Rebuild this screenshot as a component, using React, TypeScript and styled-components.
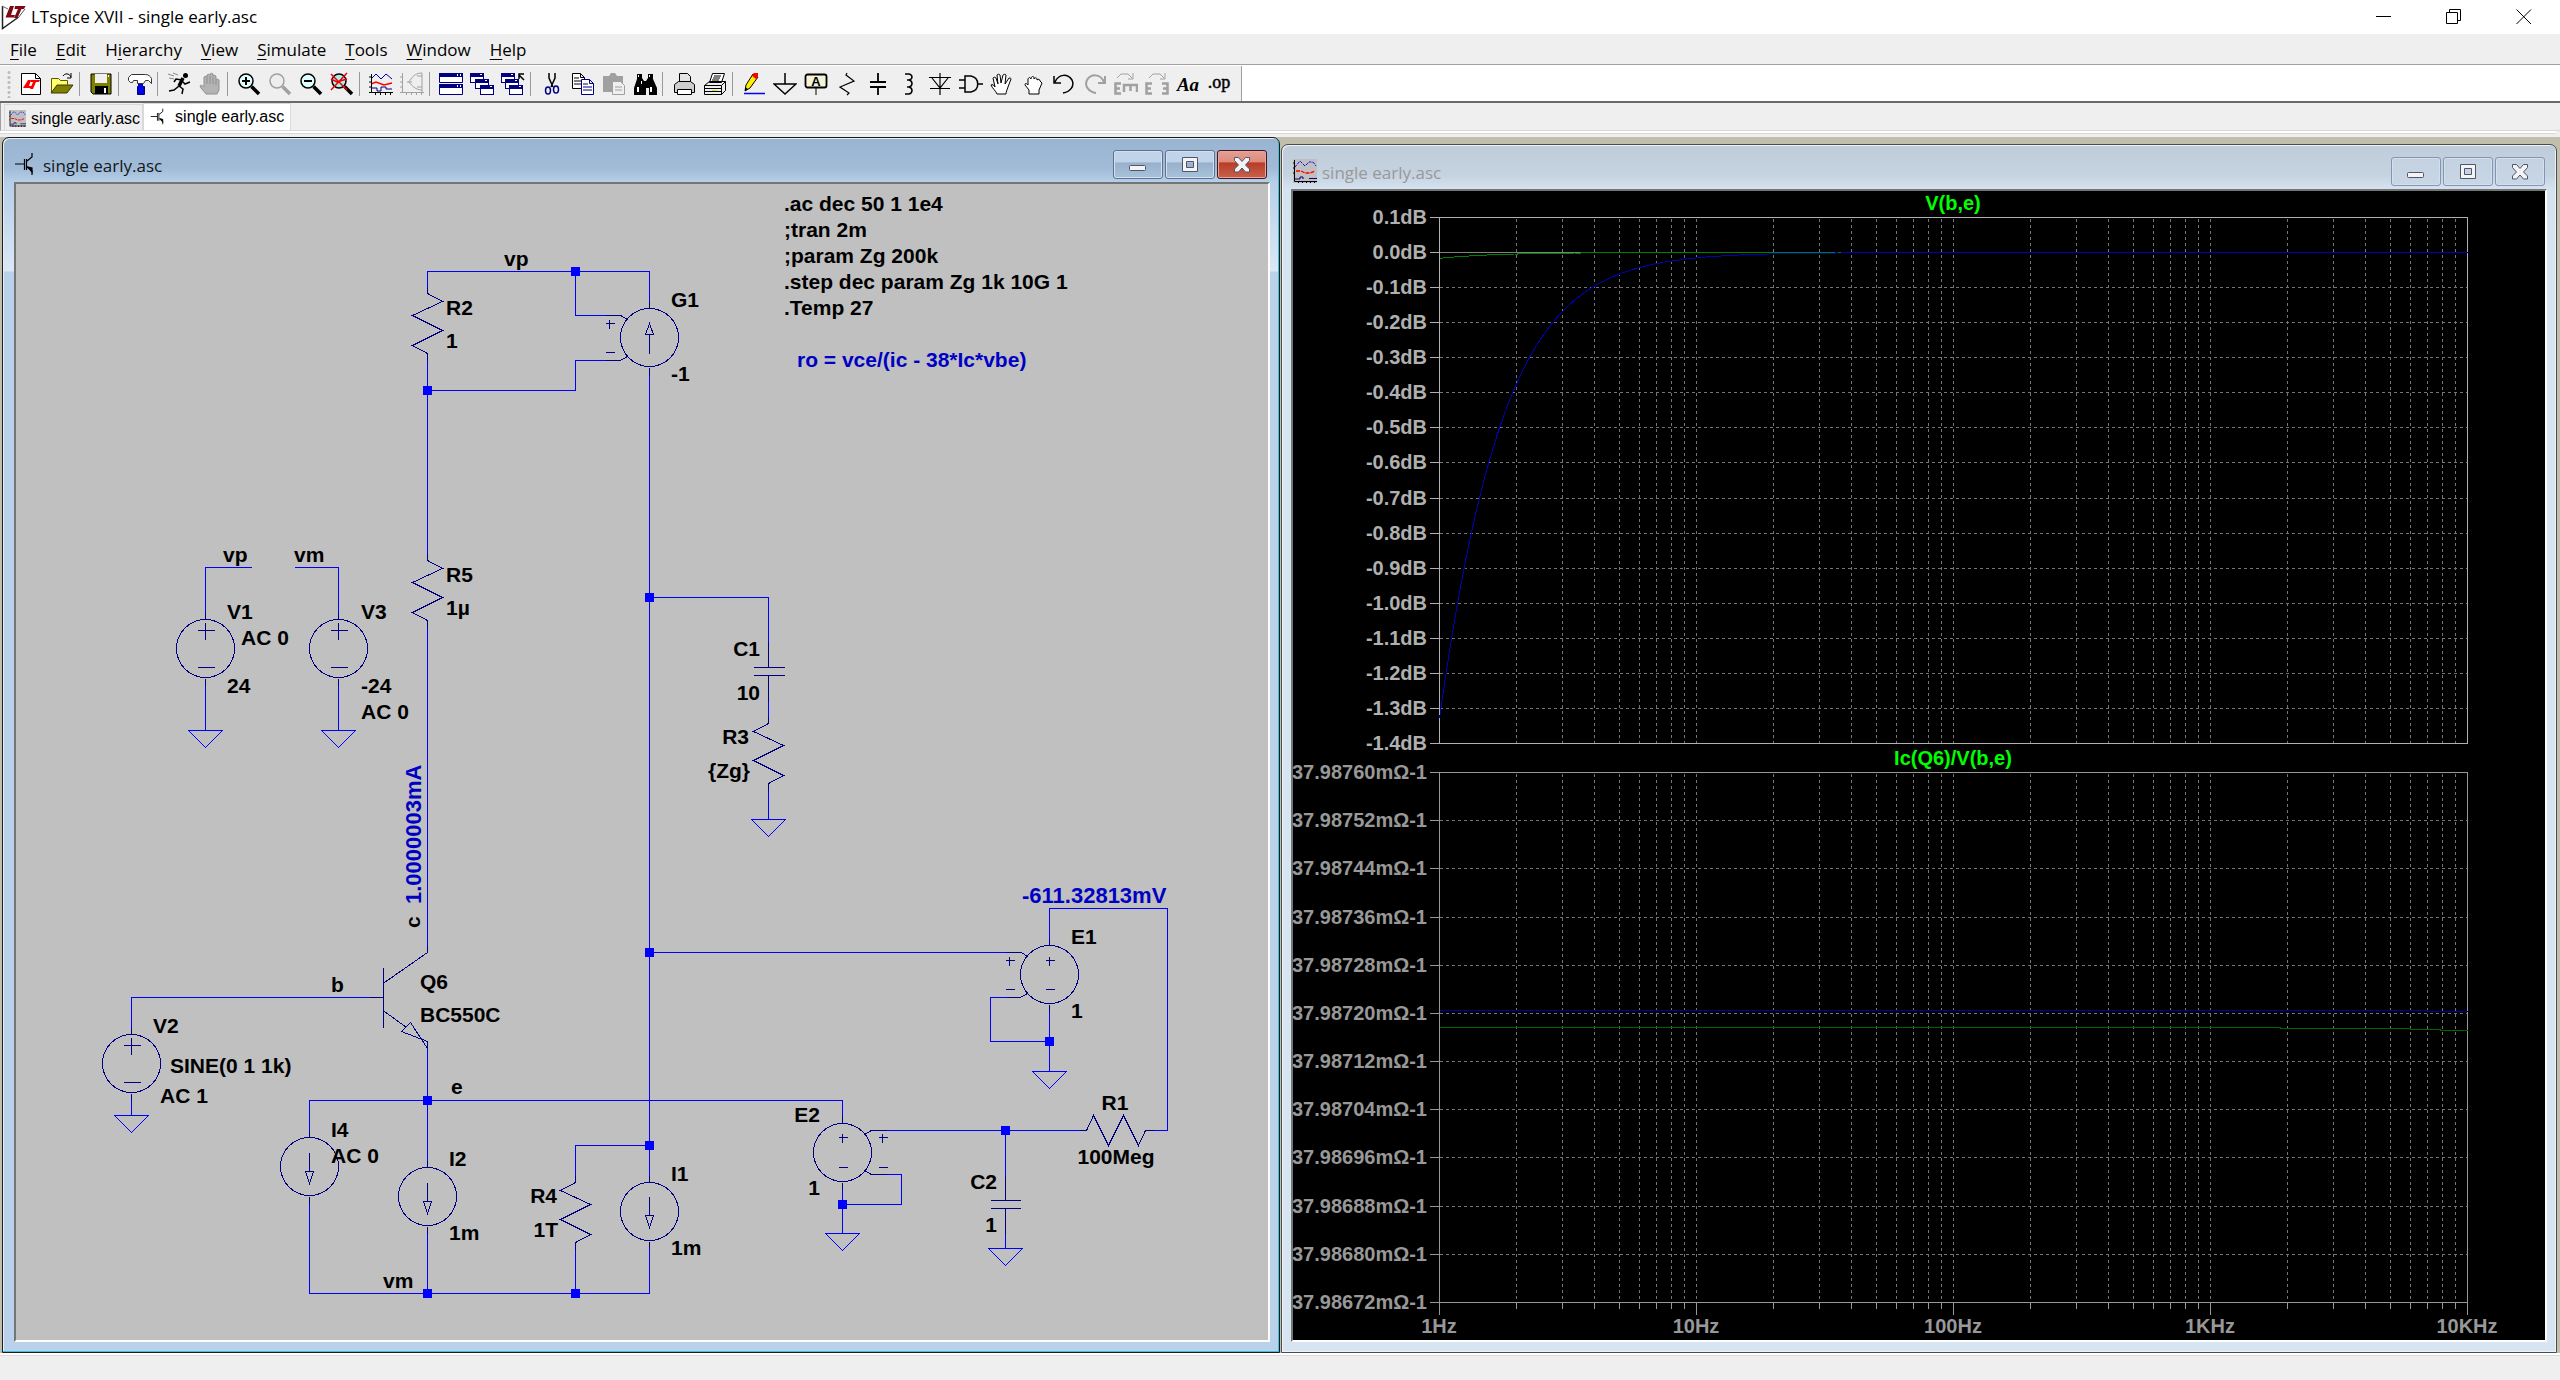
import React from 'react';
import styled, { createGlobalStyle } from 'styled-components';

const UI_FONT = '"Open Sans", "Noto Sans", sans-serif';
const ARIAL = '"Liberation Sans", Arial, sans-serif';

const GlobalStyle = createGlobalStyle`
  * { box-sizing: border-box; }
  body { margin: 0; background: #efefef; overflow: hidden; }
  button { font: inherit; color: inherit; background: none; border: 0; padding: 0; margin: 0; }
`;

/* ---------- application frame ---------- */

const App_ = styled.div`
  display: flex;
  flex-direction: column;
  height: 100vh;
  font-family: ${UI_FONT};
  font-size: 17px;
  color: #000;
  background: #efefef;
`;

const TitleBar = styled.header`
  display: flex;
  align-items: center;
  height: 34px;
  padding: 0 1px;
  background: #fff;
`;

const AppTitle = styled.h1`
  flex: 1;
  margin: 0 0 0 5px;
  font-size: 17px;
  line-height: 36px;
  font-weight: 400;
`;

const CaptionButton = styled.button`
  display: grid;
  place-items: center;
  width: 70px;
  height: 34px;
`;

const MenuBar = styled.nav`
  display: flex;
  height: 30px;
`;

const MenuItem = styled.button`
  padding: 0 9px 0 10px;
  line-height: 31px;
  u { text-underline-offset: 3px; text-decoration-thickness: 1px; }
`;

const ToolbarRow = styled.div`
  display: flex;
  height: 39px;
  background: #fff;
  border-top: 1px solid #a0a0a0;
  border-bottom: 2px solid #696969;
  padding-top: 1px;
`;

const Toolbar = styled.div`
  display: flex;
  align-items: center;
  padding: 0 7px 0 7px;
  background: #efefef;
  border-right: 1px solid #a0a0a0;
`;

const Grip = styled.span`
  width: 8px;
  height: 28px;
  background: radial-gradient(circle, #bcbcbc 0 1px, transparent 2px) 0 0 / 4px 5px repeat-y;
`;

const ToolButton = styled.button`
  display: grid;
  place-items: center;
  width: 31px;
  height: 28px;
`;

const Separator = styled.span`
  width: 8px;
  height: 24px;
  background: linear-gradient(#9a9a9a, #9a9a9a) 2px 0 / 1px 100% no-repeat;
`;

const TabStrip = styled.div`
  display: flex;
  align-items: flex-end;
  height: 28px;
  padding-left: 3px;
  border-left: 1px solid #a0a0a0;
  border-bottom: 1px solid #d9d9d9;
  font-family: ${ARIAL};
  font-size: 16px;
`;

const Tab = styled.button<{ $active?: boolean }>`
  display: flex;
  align-items: ${(p) => (p.$active ? 'flex-start' : 'center')};
  gap: ${(p) => (p.$active ? 8 : 5)}px;
  height: ${(p) => (p.$active ? 27 : 26)}px;
  padding: ${(p) => (p.$active ? '4px 6px 0 6px' : '2px 2px 0 4px')};
  line-height: 18px;
  background: ${(p) => (p.$active ? '#fff' : '#efefef')};
  border: 1px solid #d9d9d9;
  border-bottom: 0;
`;

const TabRule = styled.div`
  height: 6px;
  margin-right: 4px;
  background: linear-gradient(#fff 0 2px, #d9d9d9 2px 3px, #efefef 3px);
`;

const Desktop = styled.main`
  flex: 1;
  min-height: 0;
  display: grid;
  grid-template-columns: 1278fr 1276fr;
  gap: 1px;
  padding: 0 3px 0 2px;
  background: #c2beae;
`;

const StatusBar = styled.footer`
  height: 27px;
  border-top: 1px solid #fff;
  background: linear-gradient(#fff 0 1px, #d9d9d9 1px 2px, #efefef 2px);
`;

/* ---------- MDI child window ---------- */

const Child = styled.section<{ $active?: boolean }>`
  display: flex;
  flex-direction: column;
  min-width: 0;
  min-height: 0;
  margin-top: ${(p) => (p.$active ? 0 : 7)}px;
  padding: ${(p) => (p.$active ? '0 9px 10px 11px' : '0 9px 10px 9px')};
  border: 1px solid ${(p) => (p.$active ? '#1c1c1c' : '#4c4c4c')};
  border-radius: 7px 7px 0 0;
  box-shadow: ${(p) =>
    p.$active ? 'inset -1px -1px #35c4dd, inset 1px 1px #e6eef7' : 'inset 1px 1px #eef3f8, inset -1px -1px #eef3f8'};
  background: ${(p) =>
    p.$active
      ? 'linear-gradient(#99b4d1 0, #a1bbd7 30px, #b6cfe9 44px, #dbe8f6 133px, #b9d1ea 134px)'
      : 'linear-gradient(#bfccda 0, #c5d2df 30px, #d5e2f0 44px, #d7e4f2 134px)'};
`;

const ChildTitle = styled.div<{ $active?: boolean }>`
  flex: none;
  display: flex;
  align-items: center;
  height: 44px;
  color: ${(p) => (p.$active ? '#101820' : '#999999')};
`;

const ChildName = styled.h2`
  flex: 1;
  margin: 12px 0 0 5px;
  font-size: 17px;
  line-height: 24px;
  font-weight: 400;
`;

const IconSlot = styled.span<{ $active?: boolean }>`
  display: grid;
  margin: 8px 0 0 ${(p) => (p.$active ? 0 : 2)}px;
`;

const ChildButtons = styled.div<{ $active?: boolean }>`
  display: flex;
  gap: 2px;
  margin: ${(p) => (p.$active ? '9px 3px 0 0' : '9px 2px 0 0')};
`;

const ChildButton = styled.button<{ $tone: 'blue' | 'red' | 'pale' }>`
  display: grid;
  place-items: center;
  width: 50px;
  height: 29px;
  border: 1px solid ${(p) => ({ blue: '#5f7391', red: '#431422', pale: '#8394b4' })[p.$tone]};
  border-radius: 3px;
  box-shadow: inset 0 0 0 1px ${(p) => (p.$tone === 'red' ? '#e9a69c' : '#d3e0ee')};
  background: ${(p) =>
    ({
      blue: 'linear-gradient(#bfd3e9 0 42%, #98b0cb 43%, #a9c2dc)',
      red: 'linear-gradient(#e49f93 0, #dc8a7c 42%, #b83c26 43%, #c8614c)',
      pale: 'linear-gradient(#c4d1e1, #c9d6e6)',
    })[p.$tone]};
`;

const ChildBody = styled.div<{ $fill: string }>`
  flex: 1;
  min-height: 0;
  overflow: hidden;
  border: 2px solid;
  border-color: #757575 #fdfdfd #fdfdfd #757575;
  background: ${(p) => p.$fill};
`;

const Sheet = styled.svg`
  display: block;
  width: 100%;
  height: 100%;
`;

/* ---------- icons ---------- */

const WaveIcon = ({ size = 24 }: { size?: number }) => (
  <svg width={size} height={size} viewBox="0 0 24 24">
    <rect width="24" height="24" fill="#c0c0c0" />
    <path d="M2 8l5-6 5 5 4-4h4l3 4" fill="none" stroke="#1010ff" strokeDasharray="3 1" />
    <path d="M3 12h5l4 2h5l5-2" fill="none" stroke="#ff0000" strokeWidth="1.300" strokeDasharray="4 1" />
    <path d="M2 20h5v-2h3v2M16 19.500h8" fill="none" stroke="#000080" />
    <path d="M1.500 1v21.500H24M1 4H0M1 9H0M1 14H0M5.500 22v2M9.500 22v2M13.500 22v2M17.500 22v2M21.500 22v2" stroke="#000" fill="none" />
  </svg>
);

const TransistorIcon = ({ size = 24 }: { size?: number }) => (
  <svg width={size} height={size} viewBox="0 0 24 24" fill="none" stroke="#000" strokeWidth="1.200">
    <path d="M1 12h9M10.500 7v11M12.500 7v11M13 9l5-4V1M13 15l5 4v4" />
    <path d="M14 15l4 1v4z" fill="#000" />
  </svg>
);

const AppLogo = () => (
  <svg width="25" height="28" viewBox="0 0 25 28">
    <path d="M1.500 3v22.500L17 14.500" fill="none" stroke="#222" strokeWidth="1.500" />
    <path d="M1 3L7 6" stroke="#666" />
    <path d="M9 3h4l-3 9h4l-1 2.500H4.500z" fill="#7d0a12" />
    <path d="M14 3h10.500l-1.500 3h-2.500l-4 9h-3.500l4-9h-3.500z" fill="#7d0a12" />
    <path d="M24 6l-7 9" stroke="#555" />
  </svg>
);

const K = '#000';
const G = '#a0a0a0';

const lens = (c: string, glass: string) => (
  <>
    <path d="M14.500 14.500l7.500 7.500" stroke={c} strokeWidth="3.500" />
    <circle cx="9" cy="9" r="7" fill={glass} stroke={c} strokeWidth="1.500" />
  </>
);

const cascade = (x: number, y: number) => (
  <g key={x}>
    <rect x={x + 0.5} y={y + 0.5} width="13" height="9" fill="#fff" stroke="#000080" />
    <rect x={x} y={y} width="14" height="4" fill="#000080" />
    <rect x={x + 10} y={y + 1} width="2" height="1" fill="#fff" />
  </g>
);

const icons: Record<string, React.ReactNode> = {
  'New Schematic': (
    <>
      <path d="M2.500 1.500h14l5 5v16h-19z" fill="#fff" stroke={K} />
      <path d="M16.500 1.500v5h5" fill="none" stroke={K} />
      <path d="M9 8h3l-2 6h3l-1 2H4z" fill="#f00" />
      <path d="M12 8h9l-1 2h-3l-3 7H11l3-7h-3z" fill="#f00" />
    </>
  ),
  Open: (
    <>
      <path d="M1.500 20.500V6.500h7l2 2h7v4" fill="#ffff70" stroke="#5a5a00" />
      <path d="M1 21l6-8h16l-6 8z" fill="#808000" stroke="#3a3a00" />
      <path d="M13 4c2-3 6-3 8 1M21 1v5h-4" fill="none" stroke={K} />
    </>
  ),
  Save: (
    <>
      <path d="M2 2h20v20H4l-2-2z" fill="#808000" stroke={K} />
      <path d="M6 2h12v9H6z" fill="#efefef" />
      <path d="M6 14h13v8H6z" fill={K} />
      <path d="M15 16h2v5h-2zM19 3h1v2h-1z" fill="#fff" />
    </>
  ),
  'Control Panel': (
    <>
      <path d="M10.500 11.500h4v3h2v8h-7v-8h1z" fill="#0000e8" stroke="#000080" />
      <path d="M.5 5.500l3-3h14c3 0 5 2 6 4v5l-3-3h-3l-2 3h-6V8.500h-4l-1 2h-2l-2-2z" fill="#fff" stroke="#333" />
    </>
  ),
  Run: (
    <>
      <circle cx="18.500" cy="3.500" r="2.500" fill={K} />
      <path d="M16 6l-4 8" fill="none" stroke={K} strokeWidth="3.500" />
      <path d="M12 14l4 3-1 5M12 14l-5 4-5 1M15 8L9 7 7 10M15 9l3 3 5-2" fill="none" stroke={K} strokeWidth="1.500" />
      <path d="M1 2l6 2M2 6l5 1M6 1l5 2" stroke="#888" />
    </>
  ),
  Halt: (
    <path
      d="M8 22c-2-3-5-5-6-8 1-2 3 0 4 1V5c1-1 2-1 3 0V3c1-1 2-1 3 0V2c1-1 2-1 3 0v2c1-1 3-1 3 1v3c1-1 2-1 3 0v10l-2 4zM9 5v7M12 4v8M15 5v7M18 8v5"
      fill="#b4b4b4"
      stroke="#8f8f8f"
    />
  ),
  'Zoom In': (
    <>
      {lens(K, '#dff')}
      <path d="M5 9h8M9 5v8" stroke={K} strokeWidth="2" />
    </>
  ),
  'Zoom Area': lens(G, '#eee'),
  'Zoom Out': (
    <>
      {lens(K, '#dff')}
      <path d="M5 9h8" stroke={K} strokeWidth="2" />
    </>
  ),
  'Zoom Fit': (
    <>
      {lens(K, '#aee')}
      <path d="M1 2l16 16M17 1L1 18M1 7l6 3 10-3" stroke="#f00000" strokeWidth="1.500" fill="none" />
    </>
  ),
  'Pick Traces': (
    <>
      <path d="M2 7l5-5 5 5 5-5 6 5" fill="none" stroke="#0000a0" />
      <path d="M2 12l5-2 8 3 8-2" fill="none" stroke="#f00" strokeWidth="1.500" />
      <path d="M2 16h6v3h4v-4h5v2h6" fill="none" stroke="#000080" />
      <path d="M2.500 2v19M0 20.500h24M0 5h2M0 10h2M0 15h2M6.500 20v3M11.500 20v3M16.500 20v3M21.500 20v3" stroke={K} fill="none" />
    </>
  ),
  Autorange: (
    <>
      <path d="M22 1c-7 0-10 4-13 9 3 4 7 8 13 8M22 1v19M17 4h5M17 15h5M7 10h5" fill="none" stroke={G} />
      <path d="M2.500 1v20M0 20.500h24M0 5h2M0 10h2M0 15h2M6.500 20v3M11.500 20v3M16.500 20v3M21.500 20v3" stroke={G} fill="none" />
    </>
  ),
  'Tile Windows': (
    <>
      <path d="M.5 1.500h23v9H.5zM.5 12.500h23v10H.5z" fill="#fff" stroke="#000080" />
      <path d="M0 1h24v4H0zM0 12h24v4H0z" fill="#000080" />
      <path d="M18 2h1v2h-1zM21 2h1v2h-1zM18 13h1v2h-1zM21 13h1v2h-1z" fill="#fff" />
    </>
  ),
  'Cascade Windows': [cascade(0, 1), cascade(5, 7), cascade(10, 13)],
  'Close All': (
    <>
      {[cascade(0, 1), cascade(4, 7), cascade(8, 13)]}
      <path d="M23 8l-5-5M18 7V2h5" fill="none" stroke={K} strokeWidth="1.500" />
    </>
  ),
  Cut: (
    <>
      <path d="M9 1v5l4 9M15 1v5l-4 9" fill="none" stroke={K} strokeWidth="1.500" />
      <ellipse cx="8" cy="18.500" rx="2.500" ry="3.500" fill="none" stroke="#000080" strokeWidth="1.500" />
      <ellipse cx="16" cy="17.500" rx="2.500" ry="3.500" fill="none" stroke="#000080" strokeWidth="1.500" />
    </>
  ),
  Copy: (
    <>
      <path d="M1.500 1.500h8l4 4v11h-12zM9.500 1.500v4h4" fill="#fff" stroke={K} />
      <path d="M3 6h5M3 9h7M3 12h7" stroke={K} />
      <path d="M10.500 7.500h8l4 4v11h-12zM18.500 7.500v4h4" fill="#fff" stroke="#000080" />
      <path d="M12 12h5M12 15h9M12 18h9" stroke="#000080" />
    </>
  ),
  Paste: (
    <>
      <path d="M1 4h6l2-3h4l2 3h6v16H1z" fill={G} />
      <path d="M10.500 9.500h8l4 4v9h-12z" fill="#efefef" stroke={G} />
      <path d="M13 15h7M13 18h7" stroke={G} />
    </>
  ),
  Find: (
    <>
      <path d="M4 2h5v4l2 3h2l2-3V2h5v5l4 9v7h-8v-7h-3v7H1v-7l3-9z" fill={K} />
      <path d="M5 3h1v2H5zM16 3h1v2h-1zM4 15h2v5H4zM17 15h2v5h-2zM8 9h1v3H8z" fill="#fff" />
    </>
  ),
  Print: (
    <>
      <path d="M7.500 11V1.500h8l3 3V11" fill="#e4e4e4" stroke={K} />
      <path d="M2.500 12.500l4-3h12l4 3v8h-20z" fill="#cfcfcf" stroke={K} />
      <path d="M5.500 17.500h14v5h-14z" fill="#fff" stroke={K} />
    </>
  ),
  'Print Preview': (
    <>
      <path d="M6.500 10.500l3-9h12l-3 9z" fill="#fff" stroke={K} />
      <path d="M11 4h7M10 6h7M9 8h7" stroke={K} />
      <path d="M1.500 13.500l5-4h16l-4 4v9h-17zM18.500 13.500h-17M22.500 9.500v9l-4 4M2 16.500h16" fill="none" stroke={K} />
      <path d="M9 18h5v2H9z" fill="#e8e000" />
      <path d="M1.500 19.500h17" stroke={K} />
    </>
  ),
  'Draw Wire': (
    <>
      <path d="M3 19l1-6L11 2l5 3-8 11z" fill="#ffee00" stroke={K} />
      <path d="M10 4l2-3h4v4l-2 2z" fill="#f00" />
      <path d="M3 19v-4l3 2z" fill={K} />
      <path d="M2 21.500h21" stroke="#0000ff" strokeWidth="1.500" />
    </>
  ),
  Ground: <path d="M12 1v11M1 12h22L12 22z" fill="none" stroke={K} strokeWidth="1.500" />,
  'Label Net': (
    <>
      <rect x="1.500" y="2.500" width="21" height="13" rx="2" fill="#f4f4d8" stroke={K} strokeWidth="1.800" />
      <path d="M12 16v7" stroke={K} />
      <text x="12" y="14" textAnchor="middle" fontFamily={ARIAL} fontWeight="700" fontSize="13">A</text>
    </>
  ),
  Resistor: <path d="M12 1l-1 2 8 6-14 6 9 6-2 2" fill="none" stroke={K} strokeWidth="1.200" />,
  Capacitor: <path d="M12 1v8M4 10h16M4 15h16M12 15v8" fill="none" stroke={K} strokeWidth="1.800" />,
  Inductor: <path d="M8 2h4c4 1 4 5 0 6H10h2c4 1 4 6 0 7H10h2c4 1 4 6 0 7H8" fill="none" stroke={K} strokeWidth="1.500" />,
  Diode: <path d="M12 1v22M1 5.500h22M4 6l8 10 8-10M2 16.500h20" fill="none" stroke={K} strokeWidth="1.200" />,
  Component: <path d="M6 4h6c9 2 9 14 0 16H6zM0 8h6M0 16h6M19 12h5" fill="none" stroke={K} strokeWidth="1.500" />,
  Move: (
    <path
      d="M7 22c-1-3-5-6-6-9 1-1 3 0 4 2L3 6c1-1 2-1 3 0l2 6-1-9c1-1 2-1 3 0l1 8 2-8c1-1 2-1 3 0l-1 9 4-6c1 0 2 0 2 1l-3 8c-1 3-2 5-2 7z"
      fill="#fff"
      stroke={K}
    />
  ),
  Drag: (
    <path d="M8 22v-4L4 13c0-2 1-2 3 0V7c1-2 2-2 3 0V6c1-2 3-2 3 0v1c1-2 3-1 3 0v1c1-1 3-1 3 1l2 2-3 7v4z" fill="#fff" stroke={K} />
  ),
  Undo: <path d="M2 4v7h7M3 10C7 1 16 2 20 8c3 6-2 12-9 13" fill="none" stroke={K} strokeWidth="1.500" />,
  Redo: <path d="M22 4v7h-7M21 10C17 1 8 2 4 8c-3 6 2 12 9 13" fill="none" stroke={G} strokeWidth="2" />,
  Rotate: (
    <>
      <path d="M3 6l4-4h7l4 4M19 1v6h-5" fill="none" stroke={G} />
      <path d="M7 11.500H1.500v10H7M2 16.500h4" fill="none" stroke={G} strokeWidth="2.500" />
      <path d="M10 20v-7h13v7M16.500 13v6" fill="none" stroke={G} strokeWidth="2.500" />
    </>
  ),
  Mirror: (
    <>
      <path d="M4 6l4-4h7l4 4M20 1v6h-5" fill="none" stroke={G} />
      <path d="M7 11.500H1.500v10H7M2 16.500h4M17 11.500h5.500v10H17M22 16.500h-4" fill="none" stroke={G} strokeWidth="2.500" />
    </>
  ),
  Text: (
    <text x="12" y="19" textAnchor="middle" fontFamily='"Liberation Serif", serif' fontStyle="italic" fontWeight="700" fontSize="19">Aa</text>
  ),
  'SPICE Directive': (
    <text x="12" y="16" textAnchor="middle" fontFamily='"Liberation Serif", serif' fontSize="18" stroke={K} strokeWidth="0.500">.op</text>
  ),
};

const toolGroups = [
  ['New Schematic', 'Open'],
  ['Save'],
  ['Control Panel'],
  ['Run', 'Halt'],
  ['Zoom In', 'Zoom Area', 'Zoom Out', 'Zoom Fit'],
  ['Pick Traces', 'Autorange'],
  ['Tile Windows', 'Cascade Windows', 'Close All'],
  ['Cut', 'Copy', 'Paste', 'Find'],
  ['Print', 'Print Preview'],
  ['Draw Wire', 'Ground', 'Label Net', 'Resistor', 'Capacitor', 'Inductor', 'Diode', 'Component', 'Move', 'Drag', 'Undo', 'Redo', 'Rotate', 'Mirror', 'Text', 'SPICE Directive'],
];

const menus: [string, string, string][] = [
  ['', 'F', 'ile'],
  ['', 'E', 'dit'],
  ['H', 'i', 'erarchy'],
  ['', 'V', 'iew'],
  ['', 'S', 'imulate'],
  ['', 'T', 'ools'],
  ['', 'W', 'indow'],
  ['', 'H', 'elp'],
];

/* ---------- schematic ---------- */

const WIRE = '#0000ff';
const SYMBOL = '#000080';
const LABEL = '#0000c4';

const wires = [
  'M427 287V271H649V301', 'M575 271V315H605', 'M605 360H575V390H427', 'M427 360V553', 'M427 627V945',
  'M649 375V1175', 'M649 597H768V641', 'M768 701V716', 'M768 789V819',
  'M205 612V567H251', 'M294 567H338V612', 'M205 685V730', 'M338 685V730',
  'M649 952H1006', 'M1049 938V908H1167V1130H1153', 'M1006 997H990V1041H1049', 'M1049 1011V1071',
  'M131 1027V997H369', 'M131 1100V1115', 'M427 1048V1160', 'M309 1130V1100H842V1115',
  'M309 1203V1293H649V1248', 'M427 1233V1293', 'M649 1145H575V1175', 'M575 1248V1293',
  'M886 1130H1079', 'M1005 1130V1175', 'M1005 1233V1248', 'M886 1174H901V1204H842', 'M842 1189V1233',
];
const leads = [
  'M649 301V308', 'M605 315H620L627 319', 'M605 360H620L627 356', 'M649 367V375',
  'M768 641V667M753 667H784M753 675H784M768 675V701',
  'M1005 1175V1200M990 1200H1020M990 1208H1020M1005 1208V1233',
  'M205 612V619M205 678V685M338 612V619M338 678V685',
  'M369 997H383M383 967V1027M384 982L427 952V945M384 1011L406 1027M427 1048V1041L401 1031L410 1022Z',
  'M131 1027V1034M131 1093V1100', 'M309 1130V1137M309 1196V1203', 'M427 1160V1167M427 1226V1233',
  'M649 1175V1182M649 1241V1248', 'M1049 938V945M1049 1004V1011M842 1115V1122M842 1182V1189',
  'M1006 952H1021L1027 956M1006 997H1020L1027 993', 'M886 1130H871L864 1134M886 1174H871L864 1170',
  'M1079 1130H1086L1093 1115L1108 1145L1123 1115L1138 1145L1145 1130H1153',
];
const junctions = [[575, 271], [427, 390], [649, 597], [649, 952], [1049, 1041], [427, 1100], [649, 1145], [427, 1293], [575, 1293], [842, 1204], [1005, 1130]];
const circles = [[649, 337], [205, 648], [338, 648], [131, 1063], [309, 1166], [427, 1196], [649, 1211], [1049, 974], [842, 1152]];
const grounds = [[205, 730], [338, 730], [131, 1115], [768, 819], [1049, 1071], [842, 1233], [1005, 1248]];
const resistors: [number, number, number][] = [[427, 293, 1], [427, 560, 1], [768, 723, -1], [575, 1182, -1]];
const plusMinus: [number, number, number, number][] = [
  [205, 630, 667, 8], [338, 630, 667, 8], [131, 1045, 1082, 8], [609, 323, 352, 4],
  [1009, 960, 989, 4], [1049, 960, 989, 4], [842, 1137, 1167, 4], [882, 1137, 1167, 4],
];
const arrows = [[309, 1152], [427, 1182], [649, 1196]];

type Anchor = 'start' | 'middle' | 'end';
const labels: [number, number, string, Anchor?][] = [
  [784, 211, '.ac dec 50 1 1e4'], [784, 237, ';tran 2m'], [784, 263, ';param Zg 200k'],
  [784, 289, '.step dec param Zg 1k 10G 1'], [784, 315, '.Temp 27'],
  [504, 266, 'vp'], [446, 315, 'R2'], [446, 348, '1'], [671, 307, 'G1'], [671, 381, '-1'],
  [446, 582, 'R5'], [446, 615, '1µ'], [223, 562, 'vp'], [294, 562, 'vm'],
  [227, 619, 'V1'], [241, 645, 'AC 0'], [227, 693, '24'], [361, 619, 'V3'], [361, 693, '-24'], [361, 719, 'AC 0'],
  [760, 656, 'C1', 'end'], [760, 700, '10', 'end'], [749, 744, 'R3', 'end'], [750, 778, '{Zg}', 'end'],
  [331, 992, 'b'], [420, 989, 'Q6'], [420, 1022, 'BC550C'], [153, 1033, 'V2'], [170, 1073, 'SINE(0 1 1k)'], [160, 1103, 'AC 1'],
  [451, 1094, 'e'], [331, 1137, 'I4'], [331, 1163, 'AC 0'], [449, 1166, 'I2'], [449, 1240, '1m'],
  [671, 1181, 'I1'], [671, 1255, '1m'], [557, 1203, 'R4', 'end'], [558, 1237, '1T', 'end'], [383, 1288, 'vm'],
  [1071, 944, 'E1'], [1071, 1018, '1'], [820, 1122, 'E2', 'end'], [820, 1195, '1', 'end'],
  [997, 1189, 'C2', 'end'], [997, 1232, '1', 'end'], [1115, 1110, 'R1', 'middle'], [1116, 1164, '100Meg', 'middle'],
];

const Schematic = () => (
  <Sheet aria-label="Schematic">
    <g transform="translate(-15.5 -183.5)" fill="none" shapeRendering="crispEdges">
      <path d={wires.join('')} stroke={WIRE} />
      {grounds.map(([x, y]) => (
        <path key={`${x}-${y}`} d={`M${x - 17} ${y}h34l-17 17z`} stroke={WIRE} />
      ))}
      <g stroke={SYMBOL}>
        <path d={leads.join('')} />
        {circles.map(([x, y]) => (
          <circle key={`${x}-${y}`} cx={x} cy={y} r="29" />
        ))}
        {resistors.map(([x, y, d]) => (
          <path
            key={`${x}-${y}`}
            d={`M${x} ${y - 7}v7l${15 * d} 8l${-30 * d} 14l${30 * d} 15l${-30 * d} 15l${15 * d} 8v7`}
          />
        ))}
        {plusMinus.map(([x, p, m, r]) => (
          <path key={`${x}-${p}`} d={`M${x - r} ${p}h${2 * r + 1}M${x} ${p - r}v${2 * r + 1}M${x - r} ${m}h${2 * r + 1}`} />
        ))}
        {arrows.map(([x, y]) => (
          <path key={x} d={`M${x} ${y}v19M${x - 4} ${y + 19}h8l-4 12z`} />
        ))}
        <path d="M649 353V334M645 334h8l-4-11z" />
      </g>
      {junctions.map(([x, y]) => (
        <rect key={`${x}-${y}`} x={x - 4.5} y={y - 4.5} width="9" height="9" fill={WIRE} />
      ))}
    </g>
    <g transform="translate(-16 -184)" fontFamily={ARIAL} fontWeight="700" fontSize="21">
      {labels.map(([x, y, t, anchor = 'start']) => (
        <text key={`${x}-${y}`} x={x} y={y} textAnchor={anchor}>{t}</text>
      ))}
      <text transform="translate(420 928) rotate(-90)">c</text>
      <g fill={LABEL}>
        <text x="797" y="367">ro = vce/(ic - 38*Ic*vbe)</text>
        <g fontSize="22">
          <text x="1022" y="903">-611.32813mV</text>
          <text transform="translate(421 904) rotate(-90)">1.0000003mA</text>
        </g>
      </g>
    </g>
  </Sheet>
);

/* ---------- waveform plots ---------- */

const LEFT = 1439;
const DECADE = 257;
const RIGHT = LEFT + 4 * DECADE;
const ZERO_DB = 252;
const DB = 350.6;

const gridX = [0, 1, 2, 3].flatMap((d) =>
  [1, 2, 3, 4, 5, 6, 7, 8, 9].map((m) => ({ x: Math.round(LEFT + DECADE * (d + Math.log10(m))), major: m === 1 })),
);
const gridLines = gridX.slice(1);

const highpass = (k: number, from: number, to: number) => {
  let d = '';
  for (let x = from; x <= to; x += 3) {
    const f = Math.pow(10, (x - LEFT) / DECADE);
    const db = -10 * Math.log10(1 + k / (f * f));
    d += `${d ? 'L' : 'M'}${x} ${(ZERO_DB - db * DB).toFixed(1)}`;
  }
  return d;
};

const dbTicks = Array.from({ length: 16 }, (_, i) => ({
  y: Math.round(217 + (i * 526) / 15),
  text: `${((1 - i) / 10).toFixed(1)}dB`,
}));
const ohmTicks = Array.from({ length: 12 }, (_, i) => ({
  y: Math.round(772 + (i * 530) / 11),
  text: `${(37.9876 - i * 0.00008).toFixed(5)}mΩ-1`,
}));
const freqs = ['1Hz', '10Hz', '100Hz', '1KHz', '10KHz'];

const Pane = ({ ticks, color }: { ticks: { y: number; text: string }[]; color: string }) => {
  const top = ticks[0].y;
  const bottom = ticks[ticks.length - 1].y;
  return (
    <g>
      <g transform="translate(.5 .5)" fill="none" shapeRendering="crispEdges">
        <path
          stroke="#747474"
          strokeDasharray="3 3"
          d={gridLines.map(({ x }) => `M${x} ${top + 1}V${bottom}`).join('') + ticks.slice(1, -1).map(({ y }) => `M${LEFT} ${y}H${RIGHT}`).join('')}
        />
        <rect x={LEFT} y={top} width={RIGHT - LEFT} height={bottom - top} stroke={color} />
        <path stroke={color} d={ticks.map(({ y }) => `M1429 ${y}H${LEFT}`).join('')} />
      </g>
      <g fill={color} textAnchor="end">
        {ticks.map(({ y, text }) => (
          <text key={text} x="1427" y={y + 7}>{text}</text>
        ))}
      </g>
    </g>
  );
};

const Plots = () => (
  <Sheet aria-label="Waveforms">
    <g transform="translate(-1293 -191)" fontFamily={ARIAL} fontWeight="700" fontSize="20">
      <Pane ticks={dbTicks} color="#b0b0b0" />
      <Pane ticks={ohmTicks} color="#989898" />
      <g transform="translate(.5 .5)" fill="none" shapeRendering="crispEdges">
        <path
          stroke="#989898"
          d={gridX.map(({ x, major }) => `M${x} 1302v${major ? 12 : 6}`).join('') + `M${RIGHT} 1302v12`}
        />
        <path stroke="#808080" d={`M${LEFT} ${ZERO_DB}H1582`} />
        <path stroke="#008000" d={`${highpass(0.0039, LEFT, 1582)}V${ZERO_DB}H1840`} />
        <path stroke="#0000b4" d={`${highpass(0.358, LEFT, 1840)}M1840 ${ZERO_DB}H${RIGHT}`} />
        <path stroke="#0000a0" d={`M${LEFT} 1010H${RIGHT - 40}v1H${RIGHT}`} />
        <path stroke="#006400" d={`M${LEFT} 1027H2280v1h130v1h30v1H${RIGHT}`} />
      </g>
      <g fill="#989898" textAnchor="middle">
        {freqs.map((f, i) => (
          <text key={f} x={LEFT + DECADE * i} y="1333">{f}</text>
        ))}
      </g>
      <g fill="#00ff00" textAnchor="middle">
        <text x="1953" y="210">V(b,e)</text>
        <text x="1953" y="765">Ic(Q6)/V(b,e)</text>
      </g>
    </g>
  </Sheet>
);

/* ---------- child window ---------- */

const glyph = { fill: '#f4f4f4', stroke: '#4d566b', strokeWidth: 1 };

const MdiWindow = ({ active, icon, fill, children }: {
  active?: boolean;
  icon: React.ReactNode;
  fill: string;
  children: React.ReactNode;
}) => (
  <Child $active={active}>
    <ChildTitle $active={active}>
      <IconSlot $active={active}>{icon}</IconSlot>
      <ChildName>single early.asc</ChildName>
      <ChildButtons $active={active}>
        <ChildButton $tone={active ? 'blue' : 'pale'} aria-label="Minimize">
          <svg width="20" height="18"><rect x="1.500" y="9.500" width="16" height="5" rx="1" {...glyph} /></svg>
        </ChildButton>
        <ChildButton $tone={active ? 'blue' : 'pale'} aria-label="Maximize">
          <svg width="18" height="18">
            <path d="M1.500 1.500h15v14h-15zM5.500 5.500v6h7v-6z" fillRule="evenodd" {...glyph} />
          </svg>
        </ChildButton>
        <ChildButton $tone={active ? 'red' : 'pale'} aria-label="Close">
          <svg width="18" height="18">
            <path d="M1.500 1.500h4l3.500 4 3.500-4h4v3l-4 4.500 4 4v3h-4L9 12l-3.500 4h-4v-3l4-4-4-4.500z" {...glyph} />
          </svg>
        </ChildButton>
      </ChildButtons>
    </ChildTitle>
    <ChildBody $fill={fill}>{children}</ChildBody>
  </Child>
);

export default function App() {
  return (
    <App_>
      <GlobalStyle />
      <TitleBar>
        <AppLogo />
        <AppTitle>LTspice XVII - single early.asc</AppTitle>
        <CaptionButton aria-label="Minimize">
          <svg width="16" height="16"><path d="M0 7.500h15" stroke="#000" /></svg>
        </CaptionButton>
        <CaptionButton aria-label="Restore">
          <svg width="16" height="16" fill="none" stroke="#000">
            <path d="M.5 3.500h11v11H.5zM3.500 3.500v-3h11v11h-3" />
          </svg>
        </CaptionButton>
        <CaptionButton aria-label="Close">
          <svg width="16" height="16"><path d="M.5.5l14.500 14.500M15 .5L.5 15" stroke="#000" /></svg>
        </CaptionButton>
      </TitleBar>
      <MenuBar>
        {menus.map(([a, key, b]) => (
          <MenuItem key={key + b}>{a}<u>{key}</u>{b}</MenuItem>
        ))}
      </MenuBar>
      <ToolbarRow>
        <Toolbar role="toolbar">
          <Grip />
          {toolGroups.map((group, i) => (
            <React.Fragment key={group[0]}>
              {i > 0 && <Separator />}
              {group.map((name) => (
                <ToolButton key={name} aria-label={name}>
                  <svg width="24" height="24" viewBox="0 0 24 24">{icons[name]}</svg>
                </ToolButton>
              ))}
            </React.Fragment>
          ))}
        </Toolbar>
      </ToolbarRow>
      <TabStrip>
        <Tab><WaveIcon size={17} />single early.asc</Tab>
        <Tab $active><TransistorIcon size={17} />single early.asc</Tab>
      </TabStrip>
      <TabRule />
      <Desktop>
        <MdiWindow active icon={<TransistorIcon />} fill="#c0c0c0"><Schematic /></MdiWindow>
        <MdiWindow icon={<WaveIcon />} fill="#000"><Plots /></MdiWindow>
      </Desktop>
      <StatusBar />
    </App_>
  );
}
